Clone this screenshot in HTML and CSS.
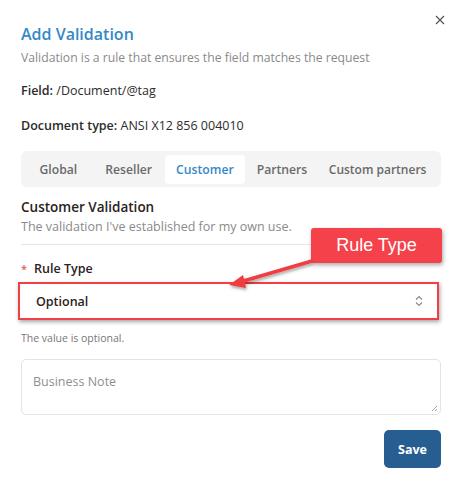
FILE: index.html
```html
<!DOCTYPE html>
<html>
<head>
<meta charset="utf-8">
<link rel="stylesheet" href="styles.css">
</head>
<body>
<div class="dialog">
  <button class="close" aria-label="Close">
    <svg width="10" height="10" viewBox="0 0 10 10"><path d="M1 1L9 9M9 1L1 9" stroke="#555" stroke-width="1.2" fill="none"/></svg>
  </button>
  <h1 class="title">Add Validation</h1>
  <p class="subtitle">Validation is a rule that ensures the field matches the request</p>
  <p class="meta"><b>Field:</b> /Document/@tag</p>
  <p class="meta doc"><b>Document type:</b> ANSI X12 856 004010</p>
  <div class="tabs">
    <span class="tab first">Global</span>
    <span class="tab">Reseller</span>
    <span class="tab active">Customer</span>
    <span class="tab">Partners</span>
    <span class="tab">Custom partners</span>
  </div>
  <h2 class="section">Customer Validation</h2>
  <p class="section-desc">The validation I've established for my own use.</p>
  <div class="divider"></div>
  <label class="label"><span class="req">*</span>Rule Type</label>
  <div class="select">
    <span>Optional</span>
    <svg width="10" height="14" viewBox="0 0 10 14"><path d="M2 5.5L5 2.5L8 5.5M2 8.5L5 11.5L8 8.5" stroke="#888" stroke-width="1.1" fill="none"/></svg>
  </div>
  <p class="hint">The value is optional.</p>
  <div class="textarea">
    <span class="placeholder">Business Note</span>
    <svg class="grip" width="8" height="8" viewBox="0 0 8 8"><path d="M7 2L2 7M7 5L5 7" stroke="#999" stroke-width="0.9"/></svg>
  </div>
  <div class="actions"><button class="save">Save</button></div>

  <div class="callout">Rule Type</div>
  <svg class="arrow" width="460" height="489" viewBox="0 0 460 489">
    <defs>
      <filter id="sh" x="-20%" y="-50%" width="140%" height="200%">
        <feDropShadow dx="1" dy="2" stdDeviation="1.5" flood-color="#000" flood-opacity="0.35"/>
      </filter>
    </defs>
    <g filter="url(#sh)">
      <line x1="312" y1="261" x2="240" y2="282" stroke="#f03c3f" stroke-width="3.5"/>
      <path d="M229 285 L243 275 L246 288 Z" fill="#f03c3f"/>
    </g>
  </svg>
</div>
</body>
</html>
```

FILE: styles.css
```css
* { box-sizing: border-box; }
html, body { margin: 0; padding: 0; background: #fff; }
body { font-family: "Open Sans", "Noto Sans", sans-serif; color: #333; }
.dialog { position: relative; width: 460px; height: 489px; padding: 22px 19px 0 21px; }
.close { position: absolute; top: 14px; right: 14px; border: 0; background: none; padding: 0; width: 12px; height: 12px; display: flex; align-items: center; justify-content: center; }
.title { margin: 0; font-size: 16px; font-weight: 600; color: #3488c8; line-height: 24px; }
.subtitle { margin: 3px 0 0; font-size: 12.2px; color: #8a8a8a; line-height: 18px; }
.meta { margin: 15px 0 0; font-size: 12.5px; color: #2c2c2c; line-height: 18px; }
.meta b { font-weight: 600; }
.doc { margin-top: 17px; }
.tabs { margin-top: 16px; height: 36px; background: #f4f4f4; border-radius: 6px; display: flex; align-items: center; padding: 0 0 0 7px; white-space: nowrap; }
.tab { font-size: 12.2px; color: #6a6a6a; font-weight: 600; padding: 0 11.5px; height: 29px; display: flex; align-items: center; border-radius: 4px; }
.tab.first { margin-right: 5px; }
.tab.active { background: #fff; color: #3488c8; margin-left: 1px; }
.tab:last-child { padding-left: 10px; font-size: 12px; }
.section { margin: 10px 0 0; font-size: 13.5px; font-weight: 600; color: #2a2222; line-height: 20px; }
.section-desc { margin: 1px 0 0; font-size: 12.5px; color: #8a8a8a; line-height: 18px; }
.divider { margin-top: 8px; height: 1px; background: #e6e6e6; }
.label { display: block; margin-top: 15px; font-size: 12.5px; font-weight: 600; color: #2a2222; line-height: 18px; }
.req { color: #e05a5a; margin-right: 7px; font-size: 11px; }
.select { margin: 4px 2px 0 -3px; height: 38px; border: 2px solid #f04045; box-shadow: 1px 2px 4px rgba(0,0,0,0.35); display: flex; align-items: center; justify-content: space-between; padding: 0 13px 0 16px; font-size: 12.5px; font-weight: 600; color: #2a2222; }
.hint { margin: 11px 0 0; font-size: 10.5px; color: #777; line-height: 15px; }
.textarea { position: relative; margin-top: 13px; height: 56px; border: 1px solid #e3e3e3; border-radius: 5px; padding: 9px 11px; }
.placeholder { font-size: 12.5px; color: #8f8f8f; }
.grip { position: absolute; right: 2px; bottom: 2px; }
.actions { margin-top: 15px; display: flex; justify-content: flex-end; }
.save { width: 57px; height: 38px; background: #265e91; color: #fff; border: 0; border-radius: 5px; font-family: inherit; font-size: 12.5px; font-weight: 700; }
.callout { position: absolute; left: 311px; top: 228px; width: 131px; height: 35px; background: #f5414a; color: #fff; font-family: "Liberation Sans", Arial, sans-serif; font-size: 18px; display: flex; align-items: center; justify-content: center; border-radius: 3px; box-shadow: 1px 2px 4px rgba(0,0,0,0.35); }
.arrow { position: absolute; left: 0; top: 0; pointer-events: none; }
```
